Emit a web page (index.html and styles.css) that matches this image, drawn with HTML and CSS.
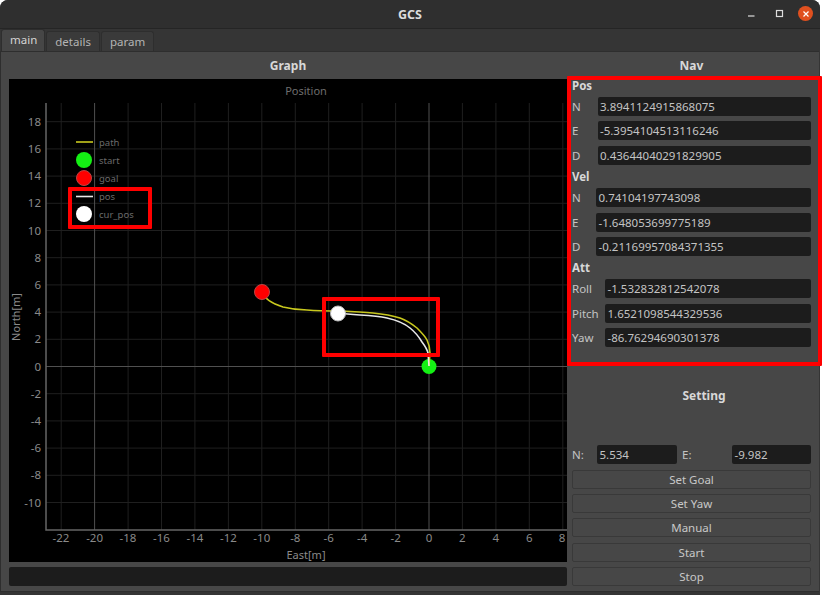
FILE: index.html
```html
<!DOCTYPE html>
<html lang="en">
<head>
    <meta charset="UTF-8">
    <title>GCS</title>
    <link rel="stylesheet" href="styles.css">
</head>
<body>
    <div class="window">
        <div class="titlebar">
            <span class="title">GCS</span>
            <div class="controls">
                <svg class="ctl" width="12" height="12" viewBox="0 0 12 12"><path d="M2 8h6.5" stroke="#ddd" stroke-width="1.2"/></svg>
                <svg class="ctl ctl-max" width="12" height="12" viewBox="0 0 12 12"><rect x="2.5" y="2.5" width="6" height="6" fill="none" stroke="#ddd" stroke-width="1.2"/></svg>
                <span class="close"><svg width="14" height="14" viewBox="0 0 14 14"><path d="M4.5 4.5l5 5M9.5 4.5l-5 5" stroke="#fff" stroke-width="1.2"/></svg></span>
            </div>
        </div>

        <div class="tabs">
            <div class="tab active">main</div>
            <div class="tab">details</div>
            <div class="tab">param</div>
        </div>

        <div class="panel">
            <div class="left">
                <h2 class="head">Graph</h2>
                <svg class="plot" width="558" height="483" viewBox="0 0 558 483">
                    <!-- grid -->
                    <path class="grid" d="M52.2 24V451M119.1 24V451M152.5 24V451M185.9 24V451M219.4 24V451M252.8 24V451M286.3 24V451M319.7 24V451M353.1 24V451M386.6 24V451M453.4 24V451M486.9 24V451M520.3 24V451M553.8 24V451"/>
                    <path class="grid" d="M37 42.7H558M37 69.9H558M37 97.1H558M37 124.3H558M37 151.5H558M37 178.7H558M37 205.9H558M37 233.1H558M37 260.3H558M37 314.7H558M37 341.9H558M37 369.1H558M37 396.3H558M37 423.5H558"/>
                    <path class="grid-main" d="M85.6 24V451M420 24V451M37 287.5H558"/>
                    <path class="axis" d="M37 24V451H558"/>

                    <!-- y ticks -->
                    <g class="ticks ticks-y">
                        <text x="32" y="47">18</text>
                        <text x="32" y="74">16</text>
                        <text x="32" y="101">14</text>
                        <text x="32" y="128">12</text>
                        <text x="32" y="156">10</text>
                        <text x="32" y="183">8</text>
                        <text x="32" y="210">6</text>
                        <text x="32" y="237">4</text>
                        <text x="32" y="264">2</text>
                        <text x="32" y="292">0</text>
                        <text x="32" y="319">-2</text>
                        <text x="32" y="346">-4</text>
                        <text x="32" y="373">-6</text>
                        <text x="32" y="400">-8</text>
                        <text x="32" y="428">-10</text>
                    </g>
                    <!-- x ticks -->
                    <g class="ticks ticks-x">
                        <text x="52" y="463">-22</text>
                        <text x="85.6" y="463">-20</text>
                        <text x="119" y="463">-18</text>
                        <text x="152.5" y="463">-16</text>
                        <text x="186" y="463">-14</text>
                        <text x="219.4" y="463">-12</text>
                        <text x="252.8" y="463">-10</text>
                        <text x="286.3" y="463">-8</text>
                        <text x="319.7" y="463">-6</text>
                        <text x="353.1" y="463">-4</text>
                        <text x="386.6" y="463">-2</text>
                        <text x="420" y="463">0</text>
                        <text x="453.4" y="463">2</text>
                        <text x="486.9" y="463">4</text>
                        <text x="520.3" y="463">6</text>
                        <text x="553" y="463">8</text>
                    </g>
                    <text class="plot-title" x="297" y="16">Position</text>
                    <text class="axis-label" x="297" y="480">East[m]</text>
                    <text class="axis-label" transform="translate(11 238) rotate(-90)">North[m]</text>

                    <!-- legend -->
                    <path class="path-line" d="M67 63H84"/>
                    <circle cx="75" cy="81" r="8" fill="#14f014"/>
                    <circle cx="75" cy="99" r="7.5" fill="#f00" stroke="#b44" stroke-width="1"/>
                    <path class="pos-line" d="M67 117.5H84"/>
                    <circle cx="75" cy="135" r="8" fill="#fff"/>
                    <g class="legend-text">
                        <text x="90" y="67">path</text>
                        <text x="90" y="85">start</text>
                        <text x="90" y="103">goal</text>
                        <text x="90" y="121">pos</text>
                        <text x="90" y="139">cur_pos</text>
                    </g>

                    <!-- trajectory -->
                    <circle cx="420" cy="287.5" r="7.5" fill="#14f014"/>
                    <path class="path-line" d="M253 213C256 221 264 225 274 228C282 230 290 231 298 231C310 232 320 232 331 232C342 232.5 353 233 364 234C374 235 383 236.5 391 239C398 241.5 403 245 408 249C413 254 416 257 418 261C420 265 421 269 421 274L420 287"/>
                    <path class="pos-line" d="M329 234C337 235 344 235.5 351 236C360 236.5 369 237 378 239C387 241 395 244 401 249C406 253 410 258 413 263C416 267 418 270 419 274L420 287"/>
                    <circle cx="253" cy="213" r="7.5" fill="#f00" stroke="#b44" stroke-width="1"/>
                    <circle cx="329" cy="234.5" r="7.5" fill="#fff" stroke="#bbb" stroke-width="1"/>
                </svg>
                <div class="status"></div>
            </div>

            <div class="right">
                <h2 class="head">Nav</h2>
                <div class="nav">
                    <h3>Pos</h3>
                    <div class="row row-pos"><label>N</label><div class="field">3.8941124915868075</div></div>
                    <div class="row row-pos"><label>E</label><div class="field">-5.3954104513116246</div></div>
                    <div class="row row-pos"><label>D</label><div class="field">0.43644040291829905</div></div>
                    <h3>Vel</h3>
                    <div class="row row-vel"><label>N</label><div class="field">0.74104197743098</div></div>
                    <div class="row row-vel"><label>E</label><div class="field">-1.648053699775189</div></div>
                    <div class="row row-vel"><label>D</label><div class="field">-0.21169957084371355</div></div>
                    <h3>Att</h3>
                    <div class="row row-att"><label>Roll</label><div class="field">-1.532832812542078</div></div>
                    <div class="row row-att"><label>Pitch</label><div class="field">1.6521098544329536</div></div>
                    <div class="row row-att"><label>Yaw</label><div class="field">-86.76294690301378</div></div>
                </div>

                <h2 class="head setting-head">Setting</h2>
                <div class="goal">
                    <label>N:</label><div class="field">5.534</div>
                    <label>E:</label><div class="field">-9.982</div>
                </div>
                <div class="buttons">
                    <button>Set Goal</button>
                    <button>Set Yaw</button>
                    <button>Manual</button>
                    <button>Start</button>
                    <button>Stop</button>
                </div>
            </div>
        </div>

        <!-- red annotation boxes -->
        <div class="mark mark-legend"></div>
        <div class="mark mark-path"></div>
        <div class="mark mark-nav"></div>
    </div>
</body>
</html>
```

FILE: styles.css
```css
html, body {
    margin: 0;
    padding: 0;
    background-color: #fff;
}

body {
    width: 822px;
    height: 595px;
    overflow: hidden;
    font-family: "Noto Sans", sans-serif;
    font-size: 11.5px;
    color: #c4c4c4;
}

.window {
    position: relative;
    width: 820px;
    height: 595px;
    background-color: #353535;
    border-radius: 8px 8px 0 0;
}

.titlebar {
    position: relative;
    height: 28px;
    display: flex;
    align-items: center;
    justify-content: center;
    background-color: #2f2f2f;
    border-bottom: 1px solid #252525;
    border-radius: 8px 8px 0 0;
}

.title {
    font-size: 12.5px;
    font-weight: 700;
    color: #dcdcdc;
}

.controls {
    position: absolute;
    right: 7px;
    top: 6px;
    display: flex;
    align-items: center;
    gap: 14px;
}

.ctl {
    display: block;
}

.ctl-max {
    margin-top: 1px;
    margin-right: -1.5px;
    margin-left: 1.5px;
}

.close {
    width: 15px;
    height: 15px;
    border-radius: 50%;
    background-color: #e0501f;
    display: flex;
    align-items: center;
    justify-content: center;
}

.tabs {
    height: 22px;
    display: flex;
    align-items: flex-end;
    gap: 1px;
    padding-left: 1px;
}

.tab {
    height: 19px;
    line-height: 19px;
    padding: 0 8px;
    background-color: #3a3a3a;
    border: 1px solid #2e2e2e;
    border-bottom: none;
    border-radius: 3px 3px 0 0;
    color: #b4b4b4;
}

.tab.active {
    height: 21px;
    line-height: 20px;
    padding: 0 7px 0 8px;
    background-color: #464646;
    color: #d4d4d4;
}

.panel {
    height: 541px;
    margin-right: 1px;
    display: flex;
    box-sizing: border-box;
    padding-left: 8px;
    background-color: #474747;
    border-top: 1px solid #2e2e2e;
    border-bottom: 1px solid #2e2e2e;
    border-left: 1px solid #2e2e2e;
}

.left {
    width: 558px;
    flex: none;
}

.right {
    width: 239px;
    flex: none;
    margin-left: 5px;
}

.head {
    margin: 0;
    height: 27px;
    line-height: 28px;
    text-align: center;
    font-size: 12px;
    font-weight: 700;
    color: #d8d8d8;
}

.plot {
    display: block;
    background-color: #000;
}

.status {
    height: 19px;
    margin-top: 5px;
    background-color: #1c1c1c;
    border-radius: 2px;
}

/* plot */
.grid {
    stroke: #1f1f1f;
    stroke-width: 1;
    fill: none;
}

.grid-main {
    stroke: #505050;
    stroke-width: 1;
    fill: none;
}

.axis {
    stroke: #666;
    stroke-width: 1.5;
    fill: none;
}

.ticks text {
    font-size: 11.5px;
    fill: #8a8a8a;
}

.ticks-y text {
    text-anchor: end;
}

.ticks-x text {
    text-anchor: middle;
}

.plot-title {
    font-size: 11px;
    fill: #6e6e6e;
    text-anchor: middle;
}

.axis-label {
    font-size: 11px;
    fill: #8a8a8a;
    text-anchor: middle;
}

.legend-text text {
    font-size: 9.5px;
    fill: #6a6a6a;
}

.path-line {
    stroke: #c8c81e;
    stroke-width: 1.6;
    fill: none;
}

.pos-line {
    stroke: #e8e8e8;
    stroke-width: 1.6;
    fill: none;
}

/* nav */
.nav h3 {
    margin: 0;
    height: 18px;
    line-height: 14px;
    font-size: 11.5px;
    font-weight: 700;
    color: #d8d8d8;
}

.row {
    display: flex;
    align-items: center;
    height: 19px;
    margin-bottom: 5.4px;
}

.row label {
    flex: none;
}

.row-pos label {
    width: 25.5px;
}

.row-vel label {
    width: 24px;
}

.row-att label {
    width: 33px;
}

.field {
    flex: 1;
    height: 19px;
    line-height: 19px;
    box-sizing: border-box;
    padding: 0 2.5px;
    background-color: #1c1c1c;
    border-radius: 2px;
    color: #c4c4c4;
    white-space: nowrap;
    overflow: hidden;
}

.setting-head {
    margin-top: 35px;
    padding-left: 25px;
}

.goal {
    display: grid;
    grid-template-columns: 25px 80px 55px 79px;
    align-items: center;
    margin-top: 36px;
}

.goal label:nth-of-type(2) {
    padding-left: 5px;
}

.buttons {
    display: flex;
    flex-direction: column;
    gap: 5.4px;
    margin-top: 5.5px;
}

button {
    height: 19px;
    padding: 0;
    font-family: inherit;
    font-size: 11.5px;
    color: #c8c8c8;
    background-color: #474747;
    border: 1px solid #393939;
    border-radius: 2px;
}

/* annotations */
.mark {
    position: absolute;
    box-sizing: border-box;
    border: 4px solid #f00;
    border-radius: 1px;
}

.mark-legend {
    left: 68px;
    top: 187px;
    width: 84px;
    height: 42px;
}

.mark-path {
    left: 322px;
    top: 297px;
    width: 118px;
    height: 60px;
}

.mark-nav {
    left: 567px;
    top: 76px;
    width: 255px;
    height: 290px;
}
```
